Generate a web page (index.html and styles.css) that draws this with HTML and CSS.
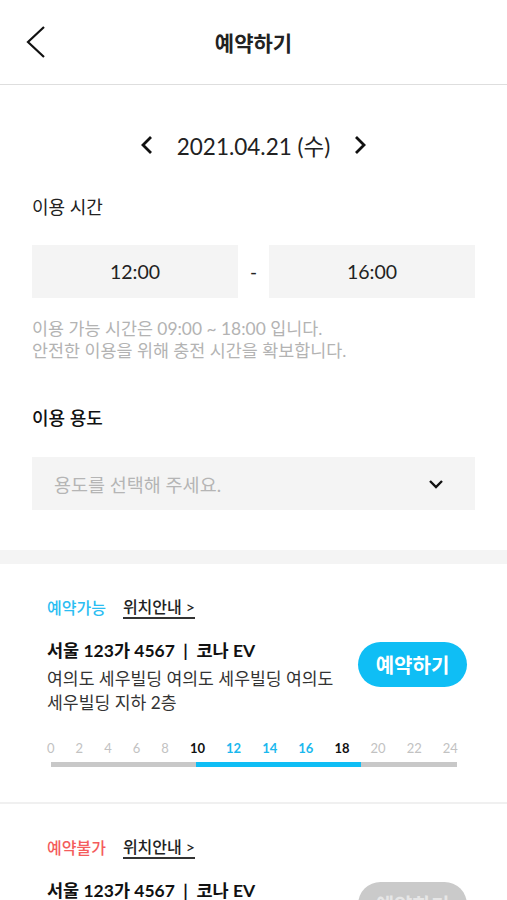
FILE: index.html
```html
<!DOCTYPE html>
<html lang="ko">
<head>
  <meta charset="UTF-8">
  <title>예약하기</title>
  <link rel="stylesheet" href="styles.css">
</head>
<body>

  <header class="top-bar">
    <button class="back-btn" type="button" aria-label="뒤로">
      <svg width="20" height="32" viewBox="0 0 20 32"><path d="M18 1 L2 16 L18 31" fill="none" stroke="#111" stroke-width="2.2"/></svg>
    </button>
    <h1 class="page-title">예약하기</h1>
    <span></span>
  </header>

  <section class="form-section">
    <div class="date-row">
      <button class="date-nav" type="button" aria-label="이전 날짜">
        <svg width="14" height="20" viewBox="0 0 14 20"><path d="M11 2 L3 10 L11 18" fill="none" stroke="#111" stroke-width="2.8"/></svg>
      </button>
      <span class="date-text">2021.04.21 (수)</span>
      <button class="date-nav" type="button" aria-label="다음 날짜">
        <svg width="14" height="20" viewBox="0 0 14 20"><path d="M3 2 L11 10 L3 18" fill="none" stroke="#111" stroke-width="2.8"/></svg>
      </button>
    </div>

    <div class="field-label">이용 시간</div>
    <div class="time-row">
      <div class="time-box">12:00</div>
      <span class="time-dash">-</span>
      <div class="time-box">16:00</div>
    </div>
    <p class="help-text">이용 가능 시간은 09:00 ~ 18:00 입니다.<br>안전한 이용을 위해 충전 시간을 확보합니다.</p>

    <div class="field-label strong">이용 용도</div>
    <div class="select-box">
      <span class="placeholder">용도를 선택해 주세요.</span>
      <svg width="16" height="10" viewBox="0 0 16 10"><path d="M2 2 L8 8 L14 2" fill="none" stroke="#111" stroke-width="2.4"/></svg>
    </div>
  </section>

  <div class="band"></div>

  <div id="car-list"></div>

  <script>
    // Cars for the selected date
    const cars = [
      { status: 'ok', name: '서울 123가 4567  |  코나 EV', place: '여의도 세우빌딩 여의도 세우빌딩 여의도 세우빌딩 지하 2층', from: 35.7, width: 40.6 },
      { status: 'no', name: '서울 123가 4567  |  코나 EV', place: '여의도 세우빌딩 여의도 세우빌딩 여의도 세우빌딩 지하 2층', from: 35.7, width: 40.6 }
    ];

    function hourClass(h) {
      if (h === 10 || h === 18) return 'hour edge';
      if (h > 10 && h < 18) return 'hour in';
      return 'hour';
    }

    function renderHours() {
      let out = '';
      for (let h = 0; h <= 24; h += 2) {
        out += `<span class="${hourClass(h)}">${h}</span>`;
      }
      return out;
    }

    function renderCars() {
      const list = document.getElementById('car-list');
      list.innerHTML = cars.map(car => `
        <div class="car-card">
          <div class="car-tags">
            <span class="status ${car.status}">${car.status === 'ok' ? '예약가능' : '예약불가'}</span>
            <a class="map-link" href="#">위치안내 &gt;</a>
          </div>
          <div class="car-row">
            <div class="car-info">
              <div class="car-name">${car.name}</div>
              <div class="car-place">${car.place}</div>
            </div>
            <button class="book-btn ${car.status === 'ok' ? '' : 'disabled'}" type="button">예약하기</button>
          </div>
          <div class="timeline">
            <div class="hours">${renderHours()}</div>
            <div class="track"><div class="track-fill" style="margin-left:${car.from}%;width:${car.width}%"></div></div>
          </div>
        </div>
      `).join('');
    }

    renderCars();
  </script>
</body>
</html>
```

FILE: styles.css
```css
body {
  margin: 0;
  background: #fff;
  font-family: Lato, "Noto Sans CJK KR", sans-serif;
  color: #222;
  overflow: hidden;
  word-break: keep-all;
}
button {
  font-family: inherit;
  border: none;
  background: none;
  padding: 0;
  cursor: pointer;
}
.top-bar {
  display: grid;
  grid-template-columns: 1fr auto 1fr;
  align-items: center;
  height: 84px;
  border-bottom: 1px solid #dedede;
  padding: 0 26px;
}
.back-btn {
  display: flex;
  justify-self: start;
}
.page-title {
  margin: 0;
  font-size: 21px;
  font-weight: 700;
  color: #222;
}
.form-section {
  padding: 40px 32px 40px;
}
.date-row {
  display: flex;
  justify-content: center;
  align-items: center;
  gap: 23px;
  height: 40px;
}
.date-nav {
  display: flex;
}
.date-text {
  font-size: 22.5px;
  color: #222;
}
.field-label {
  margin-top: 30px;
  font-size: 18px;
  line-height: 24px;
  color: #222;
}
.field-label.strong {
  margin-top: 44px;
  font-weight: 500;
  color: #111;
}
.time-row {
  display: flex;
  align-items: center;
  margin-top: 26px;
}
.time-box {
  flex: 1;
  height: 53px;
  display: flex;
  align-items: center;
  justify-content: center;
  background: #f4f4f4;
  font-size: 19.5px;
  color: #222;
}
.time-dash {
  width: 31px;
  text-align: center;
  font-size: 19px;
}
.help-text {
  margin: 20px 0 0;
  font-size: 17.4px;
  line-height: 22px;
  color: #b3b3b3;
}
.select-box {
  display: flex;
  justify-content: space-between;
  align-items: center;
  height: 53px;
  margin-top: 27px;
  padding: 0 31px 0 22px;
  background: #f4f4f4;
}
.placeholder {
  font-size: 18.5px;
  color: #b5b5b5;
}
.band {
  height: 14px;
  background: #f4f4f4;
}
.car-card {
  padding: 33px 40px 35px 47px;
  border-bottom: 2px solid #f0f0f0;
}
.car-tags {
  display: flex;
  align-items: center;
  gap: 17px;
  height: 20px;
  font-size: 16px;
  font-weight: 500;
}
.status.ok {
  color: #2bbdf2;
}
.status.no {
  color: #f45c5c;
}
.map-link {
  color: #222;
  text-decoration: none;
  border-bottom: 2px solid #333;
  padding: 1px 0 0;
  line-height: 20px;
}
.car-row {
  display: flex;
  align-items: flex-start;
  margin-top: 20px;
}
.car-info {
  flex: 1;
}
.car-name {
  font-size: 17.5px;
  font-weight: 700;
  line-height: 28px;
  white-space: pre;
  color: #111;
}
.car-place {
  padding: 2px 20px 0 0;
  font-size: 17.2px;
  line-height: 24px;
  color: #333;
}
.book-btn {
  margin-top: 5px;
  width: 109px;
  height: 45px;
  border-radius: 23px;
  background: #0fbef5;
  color: #fff;
  font-size: 20px;
  font-weight: 700;
}
.book-btn.disabled {
  background: #cacaca;
  color: #e6e6e6;
}
.timeline {
  margin-top: 24px;
  width: 411px;
}
.hours {
  display: flex;
  justify-content: space-between;
  font-size: 13px;
  line-height: 18px;
}
.hour {
  color: #c2c2c2;
}
.hour.edge {
  color: #111;
  font-weight: 700;
}
.hour.in {
  color: #1ab8ee;
  font-weight: 700;
}
.track {
  display: flex;
  height: 5px;
  margin: 5px 1px 0 4px;
  background: #c8c8c8;
}
.track-fill {
  height: 100%;
  background: #0fbef5;
}
```
